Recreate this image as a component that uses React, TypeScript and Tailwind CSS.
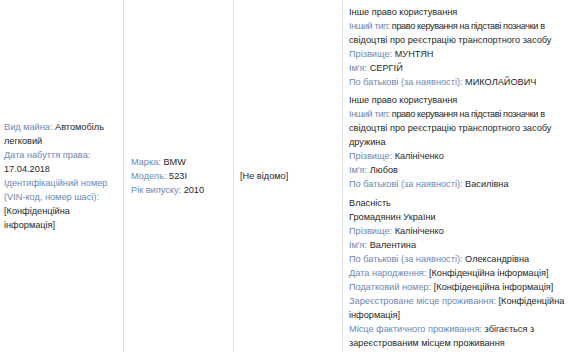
import React from "react";

const L = ({ children }: { children: React.ReactNode }) => (
  <span className="text-[#6b87b4]">{children}</span>
);

export default function App() {
  return (
    <div className="w-[579px] h-[352px] overflow-hidden bg-white font-['Liberation_Sans',Arial,sans-serif] text-[9.2px] leading-[14px] text-[#1f1f1f]">
      <div className="flex h-[352px]">
        <div className="w-[124px] shrink-0 flex items-center pl-[4px] pr-[6px] border-r border-[#dadde2]">
          <div>
            <div>
              <L>Вид майна:</L> Автомобіль легковий
            </div>
            <div>
              <L>Дата набуття права:</L> 17.04.2018
            </div>
            <div>
              <L>Ідентифікаційний номер (VIN-код, номер шасі):</L> [Конфіденційна інформація]
            </div>
          </div>
        </div>
        <div className="w-[110px] shrink-0 flex items-center pl-[7px] pr-[6px] border-r border-[#dadde2]">
          <div>
            <div>
              <L>Марка:</L> BMW
            </div>
            <div>
              <L>Модель:</L> 523I
            </div>
            <div>
              <L>Рік випуску:</L> 2010
            </div>
          </div>
        </div>
        <div className="w-[109px] shrink-0 flex items-center pl-[6px] pr-[6px] border-r border-[#dadde2]">
          <div>[Не відомо]</div>
        </div>
        <div className="w-[270px] shrink-0 pl-[6px] pr-0 pt-[5px] whitespace-nowrap">
          <div className="mb-[4px]">
            <div>Інше право користування</div>
            <div>
              <span className="tracking-[-0.4px]">
                <L>Інший тип:</L> право керування на підставі позначки в
              </span>
              <br />
              свідоцтві про реєстрацію транспортного засобу
            </div>
            <div>
              <L>Прізвище:</L> МУНТЯН
            </div>
            <div>
              <L>Ім'я:</L> СЕРГІЙ
            </div>
            <div>
              <L>По батькові (за наявності):</L> МИКОЛАЙОВИЧ
            </div>
          </div>
          <div className="mb-[5px]">
            <div>Інше право користування</div>
            <div>
              <span className="tracking-[-0.4px]">
                <L>Інший тип:</L> право керування на підставі позначки в
              </span>
              <br />
              свідоцтві про реєстрацію транспортного засобу
              <br />
              дружина
            </div>
            <div>
              <L>Прізвище:</L> Калініченко
            </div>
            <div>
              <L>Ім'я:</L> Любов
            </div>
            <div>
              <L>По батькові (за наявності):</L> Василівна
            </div>
          </div>
          <div>
            <div>Власність</div>
            <div>Громадянин України</div>
            <div>
              <L>Прізвище:</L> Калініченко
            </div>
            <div>
              <L>Ім'я:</L> Валентина
            </div>
            <div>
              <L>По батькові (за наявності):</L> Олександрівна
            </div>
            <div>
              <L>Дата народження:</L> [Конфіденційна інформація]
            </div>
            <div>
              <L>Податковий номер:</L> [Конфіденційна інформація]
            </div>
            <div>
              <L>Зареєстроване місце проживання:</L> [Конфіденційна
              <br />
              інформація]
            </div>
            <div>
              <L>Місце фактичного проживання:</L> збігається з
              <br />
              зареєстрованим місцем проживання
            </div>
          </div>
        </div>
      </div>
    </div>
  );
}
